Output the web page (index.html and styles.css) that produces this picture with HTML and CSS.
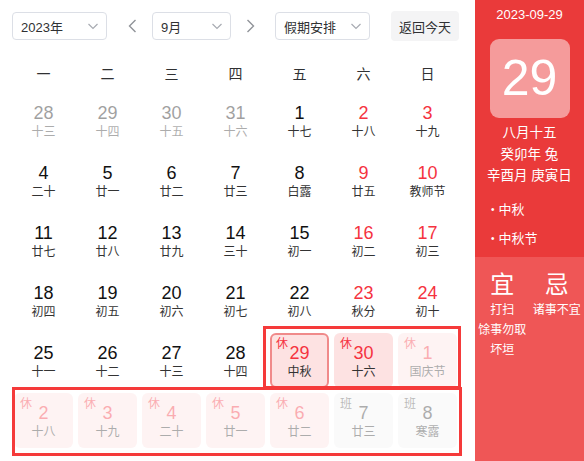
FILE: index.html
```html
<!DOCTYPE html>
<html lang="zh">
<head>
<meta charset="utf-8">
<link rel="stylesheet" href="styles.css">
</head>
<body>
<div class="app">
  <div class="main">
    <div class="toolbar">
      <div class="select w95"><span>2023年</span><svg class="chev" viewBox="0 0 12 12"><path d="M1.5 4 L6 8.5 L10.5 4"/></svg></div>
      <span class="arrow prev"><svg viewBox="0 0 9 14"><path d="M7.5 1 L1.5 7 L7.5 13"/></svg></span>
      <div class="select w79"><span>9月</span><svg class="chev" viewBox="0 0 12 12"><path d="M1.5 4 L6 8.5 L10.5 4"/></svg></div>
      <span class="arrow next"><svg viewBox="0 0 9 14"><path d="M1.5 1 L7.5 7 L1.5 13"/></svg></span>
      <div class="select w95 s3"><span>假期安排</span><svg class="chev" viewBox="0 0 12 12"><path d="M1.5 4 L6 8.5 L10.5 4"/></svg></div>
      <button class="today-btn">返回今天</button>
    </div>
    <div class="weekdays">
      <span>一</span><span>二</span><span>三</span><span>四</span><span>五</span><span>六</span><span>日</span>
    </div>
    <div class="days">
      <div class="cell other"><span class="num">28</span><span class="lunar">十三</span></div>
      <div class="cell other"><span class="num">29</span><span class="lunar">十四</span></div>
      <div class="cell other"><span class="num">30</span><span class="lunar">十五</span></div>
      <div class="cell other"><span class="num">31</span><span class="lunar">十六</span></div>
      <div class="cell"><span class="num">1</span><span class="lunar">十七</span></div>
      <div class="cell wk"><span class="num">2</span><span class="lunar">十八</span></div>
      <div class="cell wk"><span class="num">3</span><span class="lunar">十九</span></div>

      <div class="cell"><span class="num">4</span><span class="lunar">二十</span></div>
      <div class="cell"><span class="num">5</span><span class="lunar">廿一</span></div>
      <div class="cell"><span class="num">6</span><span class="lunar">廿二</span></div>
      <div class="cell"><span class="num">7</span><span class="lunar">廿三</span></div>
      <div class="cell"><span class="num">8</span><span class="lunar">白露</span></div>
      <div class="cell wk"><span class="num">9</span><span class="lunar">廿五</span></div>
      <div class="cell wk"><span class="num">10</span><span class="lunar">教师节</span></div>

      <div class="cell"><span class="num">11</span><span class="lunar">廿七</span></div>
      <div class="cell"><span class="num">12</span><span class="lunar">廿八</span></div>
      <div class="cell"><span class="num">13</span><span class="lunar">廿九</span></div>
      <div class="cell"><span class="num">14</span><span class="lunar">三十</span></div>
      <div class="cell"><span class="num">15</span><span class="lunar">初一</span></div>
      <div class="cell wk"><span class="num">16</span><span class="lunar">初二</span></div>
      <div class="cell wk"><span class="num">17</span><span class="lunar">初三</span></div>

      <div class="cell"><span class="num">18</span><span class="lunar">初四</span></div>
      <div class="cell"><span class="num">19</span><span class="lunar">初五</span></div>
      <div class="cell"><span class="num">20</span><span class="lunar">初六</span></div>
      <div class="cell"><span class="num">21</span><span class="lunar">初七</span></div>
      <div class="cell"><span class="num">22</span><span class="lunar">初八</span></div>
      <div class="cell wk"><span class="num">23</span><span class="lunar">秋分</span></div>
      <div class="cell wk"><span class="num">24</span><span class="lunar">初十</span></div>

      <div class="cell"><span class="num">25</span><span class="lunar">十一</span></div>
      <div class="cell"><span class="num">26</span><span class="lunar">十二</span></div>
      <div class="cell"><span class="num">27</span><span class="lunar">十三</span></div>
      <div class="cell"><span class="num">28</span><span class="lunar">十四</span></div>
      <div class="cell rest sel"><span class="tag">休</span><span class="num">29</span><span class="lunar">中秋</span></div>
      <div class="cell rest"><span class="tag">休</span><span class="num">30</span><span class="lunar">十六</span></div>
      <div class="cell rest other"><span class="tag">休</span><span class="num">1</span><span class="lunar">国庆节</span></div>

      <div class="cell rest other"><span class="tag">休</span><span class="num">2</span><span class="lunar">十八</span></div>
      <div class="cell rest other"><span class="tag">休</span><span class="num">3</span><span class="lunar">十九</span></div>
      <div class="cell rest other"><span class="tag">休</span><span class="num">4</span><span class="lunar">二十</span></div>
      <div class="cell rest other"><span class="tag">休</span><span class="num">5</span><span class="lunar">廿一</span></div>
      <div class="cell rest other"><span class="tag">休</span><span class="num">6</span><span class="lunar">廿二</span></div>
      <div class="cell work other"><span class="tag">班</span><span class="num">7</span><span class="lunar">廿三</span></div>
      <div class="cell work other"><span class="tag">班</span><span class="num">8</span><span class="lunar">寒露</span></div>
    </div>
    <div class="mark mark1"></div>
    <div class="mark mark2"></div>
  </div>
  <aside class="side">
    <div class="side-top">
      <div class="side-date">2023-09-29</div>
      <div class="big-day">29</div>
      <div class="side-lunar">
        <div>八月十五</div>
        <div>癸卯年 兔</div>
        <div>辛酉月 庚寅日</div>
      </div>
      <ul class="fest">
        <li>中秋</li>
        <li>中秋节</li>
      </ul>
    </div>
    <div class="side-bottom">
      <div class="col">
        <div class="big">宜</div>
        <div class="item">打扫</div>
        <div class="item">馀事勿取</div>
        <div class="item">坏垣</div>
      </div>
      <div class="col">
        <div class="big">忌</div>
        <div class="item">诸事不宜</div>
      </div>
    </div>
  </aside>
</div>
</body>
</html>
```
FILE: styles.css
```css
* { box-sizing: border-box; }
html, body { margin: 0; padding: 0; }
body {
  font-family: "Liberation Sans", "Noto Sans CJK SC", sans-serif;
  color: #303133;
  background: #fff;
  width: 584px;
  height: 461px;
  overflow: hidden;
}
.app { display: flex; height: 461px; }
.main { position: relative; width: 475px; flex: none; }

.toolbar {
  display: flex;
  align-items: center;
  padding: 11px 0 0 12px;
  height: 41px;
}
.select {
  height: 28px;
  border: 1px solid #dcdfe6;
  border-radius: 4px;
  display: flex;
  align-items: center;
  justify-content: space-between;
  padding: 0 7px 0 8px;
  font-size: 13px;
  color: #303133;
}
.w95 { width: 95px; }
.w79 { width: 79px; }
.chev { width: 12px; height: 12px; }
.chev path { fill: none; stroke: #a8abb2; stroke-width: 1.2; }
.arrow { display: flex; width: 9px; height: 14px; }
.arrow svg { width: 9px; height: 14px; }
.arrow path { fill: none; stroke: #909399; stroke-width: 1.4; }
.prev { margin-left: 21px; }
.select.w79 { margin-left: 15px; }
.next { margin-left: 15px; }
.s3 { margin-left: 20px; }
.today-btn {
  margin-left: 21px;
  height: 30px;
  width: 68px;
  border: none;
  border-radius: 4px;
  background: #f4f4f5;
  color: #303133;
  font-family: inherit;
  font-size: 13px;
  padding: 0;
}

.weekdays {
  display: grid;
  grid-template-columns: repeat(7, 59px);
  column-gap: 5px;
  margin: 18px 0 0 14px;
  height: 30px;
  line-height: 30px;
  text-align: center;
  font-size: 14px;
  color: #303133;
}

.days {
  display: grid;
  grid-template-columns: repeat(7, 59px);
  grid-auto-rows: 55px;
  column-gap: 5px;
  row-gap: 5px;
  margin: 4px 0 0 14px;
}
.cell {
  position: relative;
  display: flex;
  flex-direction: column;
  align-items: center;
  padding-top: 10px;
  border-radius: 6px;
}
.num { font-size: 18px; line-height: 20px; color: #111; }
.lunar { font-size: 12px; line-height: 18px; color: #333; }
.wk .num { color: #f5333f; }
.other { opacity: 0.4; }
.rest { background: #fde2e2; }
.rest .num { color: #f5333f; }
.work { background: #f4f4f5; }
.work .num { color: #333; }
.sel { border: 2px solid #f08a8a; padding-top: 8px; }
.tag {
  position: absolute;
  left: 6px;
  top: 4px;
  font-size: 12px;
  line-height: 14px;
  color: #f5333f;
}
.sel .tag { left: 4px; top: 2px; }
.work .tag { color: #555; }

.mark {
  position: absolute;
  border: 3px solid #f53a3a;
  pointer-events: none;
}
.mark1 { left: 263px; top: 326px; width: 198px; height: 63px; }
.mark2 { left: 12px; top: 387px; width: 450px; height: 69px; }

.side { width: 109px; flex: none; color: #fff; display: flex; flex-direction: column; }
.side-top { background: #ea3a3a; height: 257px; padding-top: 6px; }
.side-date { text-align: center; font-size: 13px; line-height: 18px; }
.big-day {
  width: 80px;
  height: 79px;
  margin: 15px auto 0;
  background: #f59b9b;
  border-radius: 9px;
  font-size: 50px;
  line-height: 79px;
  text-align: center;
}
.side-lunar { margin-top: 4px; text-align: center; font-size: 13.5px; line-height: 21.5px; }
.fest { list-style: none; margin: 8px 0 0; padding: 0 0 0 16px; font-size: 13px; line-height: 29px; }
.fest li::before { content: "•"; font-size: 10px; margin-right: 4px; vertical-align: 1px; }
.side-bottom { background: #ef5656; flex: 1; display: flex; padding-top: 13px; }
.col { width: 50%; text-align: center; }
.big { font-size: 24px; line-height: 30px; }
.item { font-size: 12px; line-height: 20px; white-space: nowrap; }
```
